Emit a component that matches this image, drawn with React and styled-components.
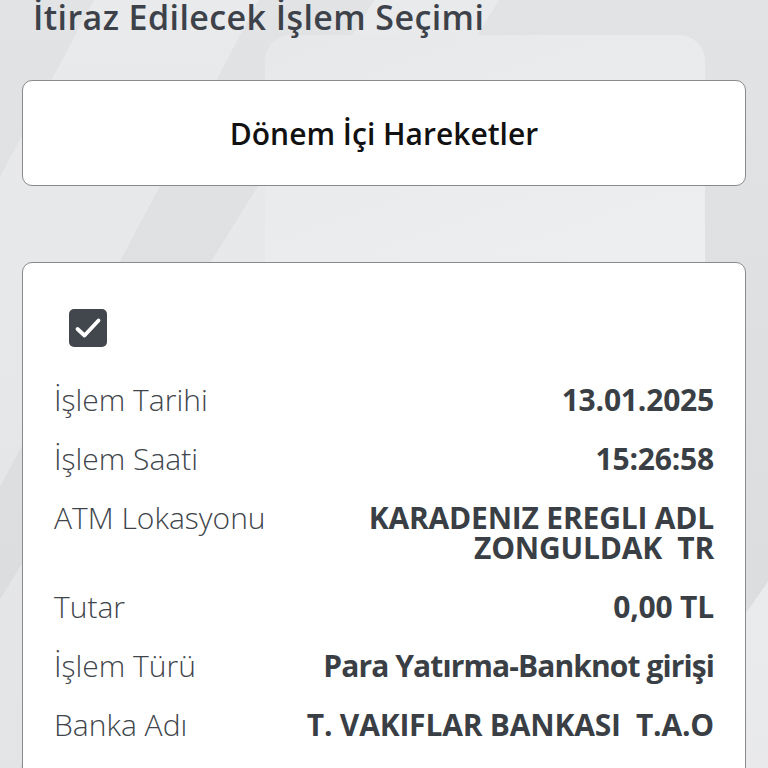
import React from 'react';
import styled, {createGlobalStyle} from 'styled-components';

const rows = [
    {label: 'İşlem Tarihi', value: '13.01.2025'},
    {label: 'İşlem Saati', value: '15:26:58'},
    {label: 'ATM Lokasyonu', value: 'KARADENIZ EREGLI ADL\nZONGULDAK  TR'},
    {label: 'Tutar', value: '0,00 TL'},
    {label: 'İşlem Türü', value: 'Para Yatırma-Banknot girişi', narrow: true},
    {label: 'Banka Adı', value: 'T. VAKIFLAR BANKASI  T.A.O'},
];

export default function App() {
    return (
        <Page>
            <GlobalStyle/>
            <Title>İtiraz Edilecek İşlem Seçimi</Title>
            <PeriodButton>Dönem İçi Hareketler</PeriodButton>
            <DetailCard>
                <Check>
                    <svg width="28" height="24" viewBox="0 0 28 24">
                        <path d="M3.5 13 L10.5 19.5 L24.5 4.5" fill="none" stroke="#fff" strokeWidth="3.8"
                              strokeLinecap="round" strokeLinejoin="round"/>
                    </svg>
                </Check>
                <Rows>
                    {rows.map(r => (
                        <Row key={r.label}>
                            <Label>{r.label}</Label>
                            <Value narrow={r.narrow}>{r.value}</Value>
                        </Row>
                    ))}
                </Rows>
            </DetailCard>
        </Page>
    )
}

const GlobalStyle = createGlobalStyle`
  html, body {
    margin: 0;
    padding: 0;
    height: 768px;
    overflow: hidden;
  }
  body {
    font-family: "Open Sans", "Liberation Sans", sans-serif;
    background-color: #dcdddf;
    background-image:
      linear-gradient(118deg, transparent 0 8%, rgba(255,255,255,0.25) 8% 22%, transparent 22% 100%),
      linear-gradient(122deg, transparent 0 30%, rgba(255,255,255,0.25) 30% 40%, transparent 40% 100%),
      linear-gradient(125deg, transparent 0 90%, rgba(255,255,255,0.4) 90% 100%),
      linear-gradient(180deg, #e2e3e5 0%, #dadbdd 100%);
  }
`

const Page = styled.div`
  position: relative;
  width: 768px;
  height: 768px;
  box-sizing: border-box;
  padding: 0 22px;
  display: flex;
  flex-direction: column;
  overflow: hidden;

  &::before {
    content: '';
    position: absolute;
    left: 265px;
    top: 35px;
    width: 440px;
    height: 900px;
    border-radius: 26px;
    background: linear-gradient(160deg, #e7e8ea 0%, #eff0f1 45%, #eaebec 100%);
    z-index: 0;
  }
  & > * {
    position: relative;
    z-index: 1;
    flex-shrink: 0;
  }
`

const Title = styled.h1`
  margin: -3px 0 0 11px;
  font-size: 34px;
  line-height: 40px;
  font-weight: 600;
  color: #3d424a;
  letter-spacing: 0.4px;
  white-space: nowrap;
`

const PeriodButton = styled.div`
  margin-top: 43px;
  height: 106px;
  box-sizing: border-box;
  background: #fff;
  border: 1.5px solid #8a8a8a;
  border-radius: 10px;
  display: flex;
  align-items: center;
  justify-content: center;
  font-size: 30px;
  font-weight: 600;
  color: #111;
`

const DetailCard = styled.div`
  margin-top: 76px;
  background: #fff;
  border: 1.5px solid #8a8a8a;
  border-radius: 10px;
  padding: 46px 31px 40px 31px;
  flex: 1 0 auto;
`

const Check = styled.div`
  width: 38px;
  height: 38px;
  margin-left: 15px;
  border-radius: 5px;
  background: #41474d;
  display: flex;
  align-items: center;
  justify-content: center;
`

const Rows = styled.div`
  margin-top: 38px;
  display: flex;
  flex-direction: column;
  gap: 29px;
`

const Row = styled.div`
  display: flex;
  justify-content: space-between;
  align-items: flex-start;
  font-size: 30px;
  line-height: 30px;
`

const Label = styled.div`
  font-weight: 300;
  color: #40454b;
  white-space: nowrap;
`

const Value = styled.div`
  font-weight: 700;
  color: #3a3f45;
  text-align: right;
  white-space: pre-wrap;
  letter-spacing: ${props => props.narrow ? '-0.9px' : '-0.2px'};
`
